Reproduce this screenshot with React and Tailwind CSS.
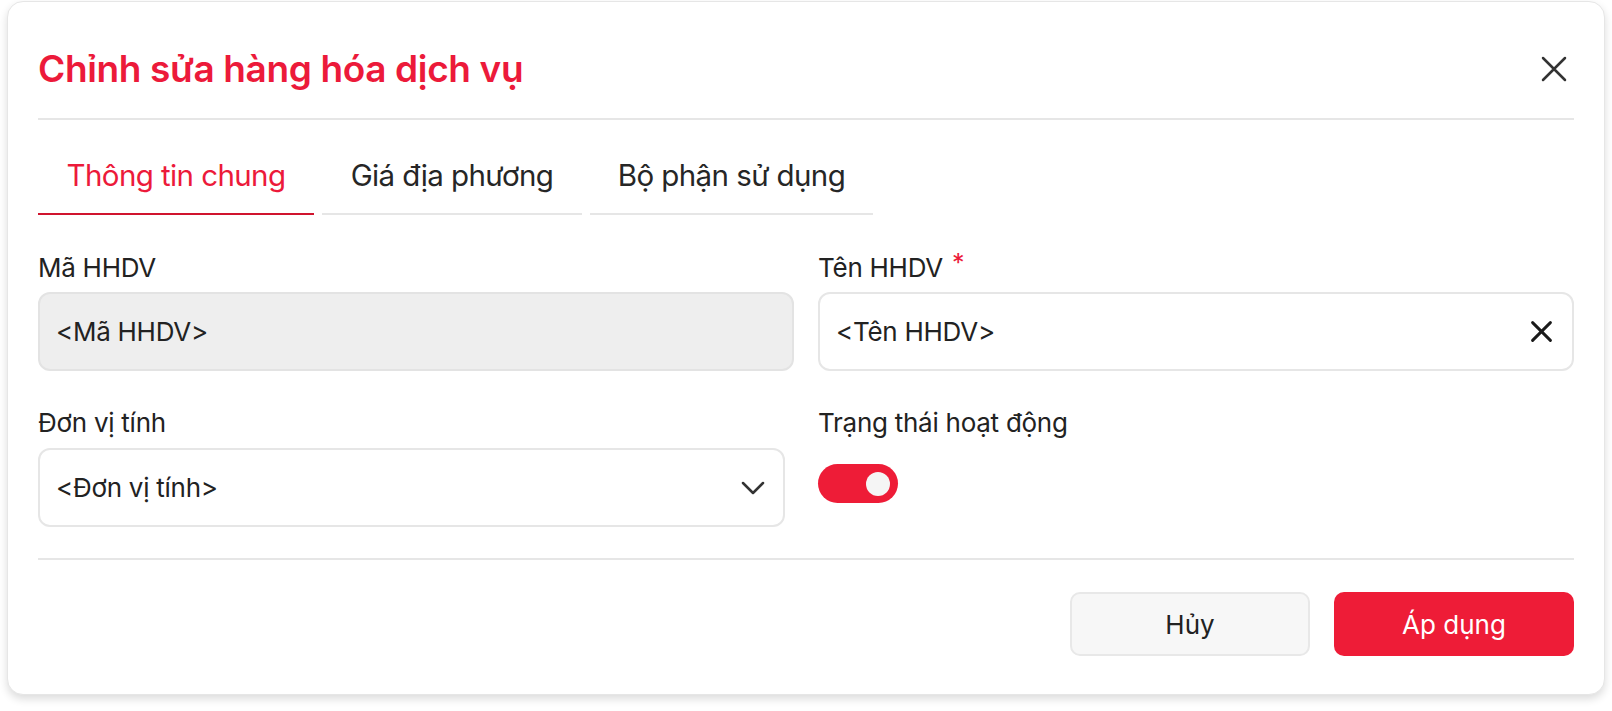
import { useState } from "react";

function CloseIcon({ className, size = 26, stroke = 2.5 }) {
  return (
    <svg className={className} width={size} height={size} viewBox="0 0 26 26" fill="none" stroke="currentColor" strokeWidth={stroke} strokeLinecap="round">
      <path d="M2 2L24 24M24 2L2 24" />
    </svg>
  );
}

function ChevronDown() {
  return (
    <svg width="24" height="14" viewBox="0 0 24 14" fill="none" stroke="currentColor" strokeWidth={2.5} strokeLinecap="round" strokeLinejoin="round">
      <path d="M2 2L12 12L22 2" />
    </svg>
  );
}

const tabs = [
  { label: "Thông tin chung", width: "w-[276px]" },
  { label: "Giá địa phương", width: "w-[260px]" },
  { label: "Bộ phận sử dụng", width: "w-[283px]" },
];

export default function App() {
  const [active, setActive] = useState(0);
  const [enabled, setEnabled] = useState(true);

  return (
    <div className="min-h-screen bg-white px-[7px] pt-[1px] font-['Inter',sans-serif] text-[#222]">
      <div className="rounded-2xl border border-[#e6e6e6] bg-white px-[30px] pt-[32px] pb-[38px] shadow-[0_4px_8px_rgba(0,0,0,0.14)]">
        {/* header */}
        <div className="flex h-[70px] items-center justify-between">
          <h1 className="text-[37px] font-semibold tracking-[-0.01em] text-[#ec1a3a]">Chỉnh sửa hàng hóa dịch vụ</h1>
          <button className="flex h-10 w-10 items-center justify-center text-[#333]">
            <CloseIcon />
          </button>
        </div>
        <div className="mt-[14px] border-t-2 border-[#e6e6e6]" />

        {/* tabs */}
        <div className="mt-6 flex gap-2">
          {tabs.map((t, i) => (
            <button
              key={t.label}
              onClick={() => setActive(i)}
              className={`${t.width} border-b-2 pt-[14px] pb-[21px] text-center text-[29.5px] leading-[34px] tracking-[-0.02em] ${
                active === i ? "border-[#d0142e] text-[#ec1a3a]" : "border-[#e6e6e6] text-[#262626]"
              }`}
            >
              {t.label}
            </button>
          ))}
        </div>

        {/* form */}
        <div className="mt-[37px] grid grid-cols-2 gap-x-6 gap-y-9">
          <div>
            <label className="block text-[26px] leading-[32px] tracking-[-0.01em]">Mã HHDV</label>
            <div className="mt-2 flex h-[79px] items-center rounded-xl border-2 border-[#e3e3e3] bg-[#eeeeee] px-4 text-[26px] tracking-[-0.01em]">
              &lt;Mã HHDV&gt;
            </div>
          </div>
          <div>
            <label className="flex items-start text-[26px] leading-[32px] tracking-[-0.01em]">
              Tên HHDV
              <span className="ml-[9px] -mt-[1px] text-[25px] leading-[25px] text-[#ec1a3a]">*</span>
            </label>
            <div className="mt-2 flex h-[79px] items-center justify-between rounded-xl border-2 border-[#e6e6e6] bg-white pl-4 pr-5 text-[26px] tracking-[-0.01em]">
              <span>&lt;Tên HHDV&gt;</span>
              <CloseIcon size={21} stroke={3.6} className="text-[#1a1a1a]" />
            </div>
          </div>
          <div className="pr-[9px]">
            <label className="block text-[26px] leading-[32px] tracking-[-0.01em]">Đơn vị tính</label>
            <div className="mt-[9px] flex h-[79px] items-center justify-between rounded-xl border-2 border-[#e6e6e6] bg-white pl-4 pr-[18px] text-[26px] tracking-[-0.01em]">
              <span>&lt;Đơn vị tính&gt;</span>
              <span className="text-[#333]">
                <ChevronDown />
              </span>
            </div>
          </div>
          <div>
            <label className="block text-[26px] leading-[32px] tracking-[-0.01em]">Trạng thái hoạt động</label>
            <button
              onClick={() => setEnabled(!enabled)}
              className={`mt-[25px] flex h-[39px] w-[80px] items-center rounded-full px-2 ${
                enabled ? "justify-end bg-[#ee1c37]" : "justify-start bg-[#d4d4d4]"
              }`}
            >
              <span className="h-6 w-6 rounded-full bg-[#f5f5f5]" />
            </button>
          </div>
        </div>

        <div className="mt-[31px] border-t-2 border-[#e6e6e6]" />

        {/* footer */}
        <div className="mt-[32px] flex justify-end gap-6">
          <button className="h-[64px] w-[240px] rounded-[10px] border-2 border-[#e8e8e8] bg-[#f7f7f7] text-[26px] text-[#222]">
            Hủy
          </button>
          <button className="h-[64px] w-[240px] rounded-[10px] bg-[#ee1c37] text-[26px] text-white">Áp dụng</button>
        </div>
      </div>
    </div>
  );
}
